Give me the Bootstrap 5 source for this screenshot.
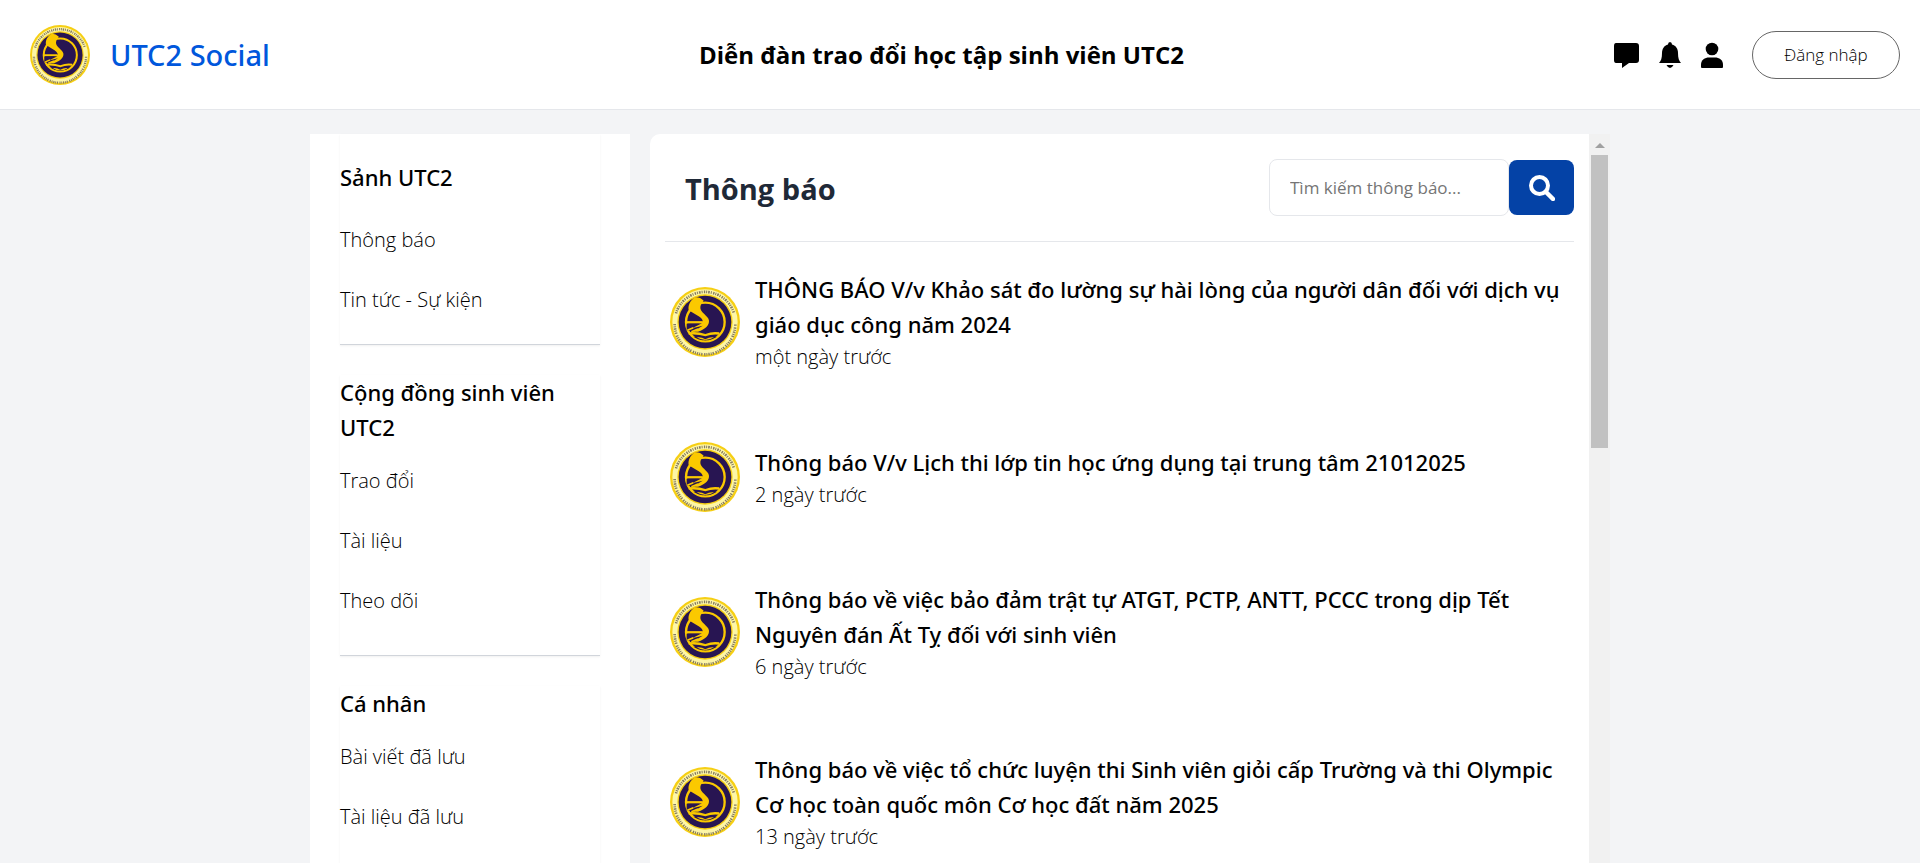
<!DOCTYPE html>
<html lang="vi">
<head>
<meta charset="utf-8">
<meta name="viewport" content="width=device-width, initial-scale=1">
<title>UTC2 Social</title>
<link href="https://cdn.jsdelivr.net/npm/bootstrap@5.3.0/dist/css/bootstrap.min.css" rel="stylesheet">
<style>
  body { font-family: "Segoe UI", "Open Sans", "Noto Sans", sans-serif; background: #f3f4f6; color: #000; }
  a { color: inherit; text-decoration: none; }
  .topbar { height: 110px; border-bottom: 1px solid #e5e7eb; padding: 0 20px 0 30px; }
  .logo-sm { width: 60px; height: 60px; }
  .logo-md { width: 70px; height: 70px; }
  .brand, .menu h2, .post h2 { font-family: "Segoe UI", "Noto Sans", "Open Sans", sans-serif; font-weight: 500; }
  .brand { font-size: 29px; color: #0057dc; }
  .site-title { font-size: 24px; font-weight: 700; }
  .tools { gap: 17px; }
  .icon-btn { border: 0; background: none; padding: 0; line-height: 0; }
  .icon-btn svg { width: 26px; height: 26px; }
  .login { width: 148px; height: 48px; margin-left: 10px; border: 1px solid #666; border-radius: 24px; font-size: 17px; font-weight: 300; background: #fff; color: #000; }
  .shell { max-width: 1300px; gap: 20px; padding-top: 24px; }
  .menu { width: 320px; padding: 0 30px; }
  .menu section { border-bottom: 1px solid #d1d5db; box-shadow: 0 1px 2px rgba(0,0,0,.06); margin-bottom: 30px; padding-bottom: 24px; }
  .menu section:first-child { padding: 26px 0 14px; }
  .menu h2 { font-size: 22px; line-height: 35px; margin: 0 0 6px; }
  .menu section:first-child h2 { margin-bottom: 15px; }
  .menu a { display: block; line-height: 60px; font-size: 20px; font-weight: 300; }
  .feed { border-radius: 10px 0 0 0; padding: 0 15px; }
  .feed-head { height: 108px; border-bottom: 1px solid #e5e7eb; padding-left: 20px; }
  .feed-head h1 { font-size: 29px; font-weight: 700; color: #1f2937; }
  .search input { width: 240px; height: 57px; border: 1px solid #e5e7eb; border-radius: 8px; padding: 0 20px; font-size: 17px; font-weight: 400; }
  .search input::placeholder { color: #757575; opacity: 1; }
  .search button { width: 65px; height: 55px; border: 0; border-radius: 8px; background: #0442a6; color: #fff; }
  .post { padding: 35px 5px; gap: 15px; }
  .posts > .post:first-child { padding-top: 30px; }
  .post h2 { font-size: 22px; line-height: 35px; margin: 0; }
  .post time { display: block; font-size: 20px; line-height: 30px; font-weight: 300; }
  .track { width: 21px; background: #f1f1f1; padding: 9px 2px 0; }
  .track .arrow { border: 5px solid transparent; border-top: 0; border-bottom-color: #a0a0a0; width: 10px; height: 5px; margin: 0 auto 7px; }
  .track .thumb { height: 293px; background: #c1c1c1; }
</style>
</head>
<body class="vh-100 d-flex flex-column overflow-hidden">
<svg width="0" height="0" class="position-absolute" aria-hidden="true">
  <symbol id="utc-logo" viewBox="0 0 210 210">
    <circle cx="105" cy="105" r="105" fill="#f6cf14"/>
    <circle cx="105" cy="105" r="98" fill="#fdf6a6"/>
    <circle cx="105" cy="105" r="83" fill="#f6cf14"/>
    <circle cx="105" cy="105" r="79" fill="#281552"/>
    <path d="M18 79A91 91 0 0 1 192 79" fill="none" stroke="#857a63" stroke-width="8" stroke-dasharray="4 3 3 3 5 3 3 4"/>
    <path d="M14 111A91 91 0 0 0 196 111" fill="none" stroke="#857a63" stroke-width="8" stroke-dasharray="4 3 3 3 4 3 3 3 4 5"/>
    <circle cx="106" cy="105" r="58" fill="none" stroke="#fbc900" stroke-width="7"/>
    <path d="M76 31C61 39 53 55 56 70L86 88Q98 96 98 103H48V109H96L66 124 98 116 68 134H84C107 126 118 114 117 101 116 86 89 77 91 60 92 51 98 46 101 41Q90 30 76 31Z" fill="#fbc900"/>
    <path d="M50 110L90 109 62 121 68 124 58 131 50 130Z" fill="#281552"/>
    <path d="M46 106H96M52 130L70 122M64 134L84 126" stroke="#fbc900" stroke-width="5"/>
    <path d="M56 136Q82 132 106 141 128 132 148 136V143Q126 140 106 148 82 140 56 143Z" fill="#fbc900"/>
    <path d="M70 149Q89 147 106 153 122 147 141 149 124 160 106 160 86 160 70 149Z" fill="#281552"/>
    <path d="M80 151Q94 149 106 157 119 149 132 151 120 159 106 159 92 159 80 151Z" fill="#fbc900"/>
  </symbol>
</svg>

<header class="topbar bg-white d-flex align-items-center justify-content-between flex-shrink-0">
  <a href="#" class="d-flex align-items-center brand">
    <svg class="logo-sm me-3" role="img" aria-label="UTC2"><use href="#utc-logo"/></svg><span class="ms-1">UTC2 Social</span>
  </a>
  <div class="site-title">Diễn đàn trao đổi học tập sinh viên UTC2</div>
  <div class="tools d-flex align-items-center">
    <button class="icon-btn" aria-label="Tin nhắn"><svg viewBox="0 0 26 26"><path d="M3 1H23Q26 1 26 4V18Q26 21 23 21H16L9 26V21H3Q1 21 1 18V4Q1 1 3 1Z"/></svg></button>
    <button class="icon-btn" aria-label="Thông báo"><svg viewBox="0 0 26 26"><path d="M14 0Q16 0 16 2.500C20 3.500 22 7 22 11 22 16 23 19 25 21H3C5 19 6 16 6 11 6 7 8 3.500 12 2.500Q12 0 14 0ZM10.500 23H17.500Q16 26 14 26 12 26 10.500 23Z"/></svg></button>
    <button class="icon-btn" aria-label="Tài khoản"><svg viewBox="0 0 26 26"><circle cx="13" cy="7" r="6.300"/><path d="M2 25V22.500C2 18 6 15.500 10 15.500H16C20 15.500 24 18 24 22.500V25Q24 26 23 26H3Q2 26 2 25Z"/></svg></button>
    <button class="login">Đăng nhập</button>
  </div>
</header>

<div class="shell container-fluid px-0 d-flex flex-grow-1 overflow-hidden">
  <nav class="menu bg-white flex-shrink-0">
    <section><h2>Sảnh UTC2</h2><a href="#">Thông báo</a><a href="#">Tin tức - Sự kiện</a></section>
    <section><h2>Cộng đồng sinh viên UTC2</h2><a href="#">Trao đổi</a><a href="#">Tài liệu</a><a href="#">Theo dõi</a></section>
    <section><h2>Cá nhân</h2><a href="#">Bài viết đã lưu</a><a href="#">Tài liệu đã lưu</a></section>
  </nav>
  <div class="d-flex flex-grow-1">
    <main class="feed bg-white flex-grow-1">
      <div class="feed-head d-flex align-items-center justify-content-between">
        <h1 class="m-0 pt-1">Thông báo</h1>
        <form class="search d-flex align-items-center">
          <input type="text" placeholder="Tìm kiếm thông báo..." aria-label="Tìm kiếm thông báo">
          <button type="button" aria-label="Tìm kiếm"><svg width="26" height="26" viewBox="0 0 26 26" fill="none" stroke="currentColor"><circle cx="10.500" cy="10.500" r="8.500" stroke-width="4"/><path d="M17 17L24 24" stroke-width="4.500" stroke-linecap="round"/></svg></button>
        </form>
      </div>
      <div class="posts">
        <article class="post d-flex align-items-center">
          <svg class="logo-md flex-shrink-0" aria-hidden="true"><use href="#utc-logo"/></svg>
          <div><h2><a href="#">THÔNG BÁO V/v Khảo sát đo lường sự hài lòng của người dân đối với dịch vụ giáo dục công năm 2024</a></h2><time>một ngày trước</time></div>
        </article>
        <article class="post d-flex align-items-center">
          <svg class="logo-md flex-shrink-0" aria-hidden="true"><use href="#utc-logo"/></svg>
          <div><h2><a href="#">Thông báo V/v Lịch thi lớp tin học ứng dụng tại trung tâm 21012025</a></h2><time>2 ngày trước</time></div>
        </article>
        <article class="post d-flex align-items-center">
          <svg class="logo-md flex-shrink-0" aria-hidden="true"><use href="#utc-logo"/></svg>
          <div><h2><a href="#">Thông báo về việc bảo đảm trật tự ATGT, PCTP, ANTT, PCCC trong dịp Tết Nguyên đán Ất Tỵ đối với sinh viên</a></h2><time>6 ngày trước</time></div>
        </article>
        <article class="post d-flex align-items-center">
          <svg class="logo-md flex-shrink-0" aria-hidden="true"><use href="#utc-logo"/></svg>
          <div><h2><a href="#">Thông báo về việc tổ chức luyện thi Sinh viên giỏi cấp Trường và thi Olympic Cơ học toàn quốc môn Cơ học đất năm 2025</a></h2><time>13 ngày trước</time></div>
        </article>
      </div>
    </main>
    <div class="track flex-shrink-0" aria-hidden="true"><div class="arrow"></div><div class="thumb"></div></div>
  </div>
</div>
<script src="https://cdn.jsdelivr.net/npm/bootstrap@5.3.0/dist/js/bootstrap.bundle.min.js"></script>
</body>
</html>
